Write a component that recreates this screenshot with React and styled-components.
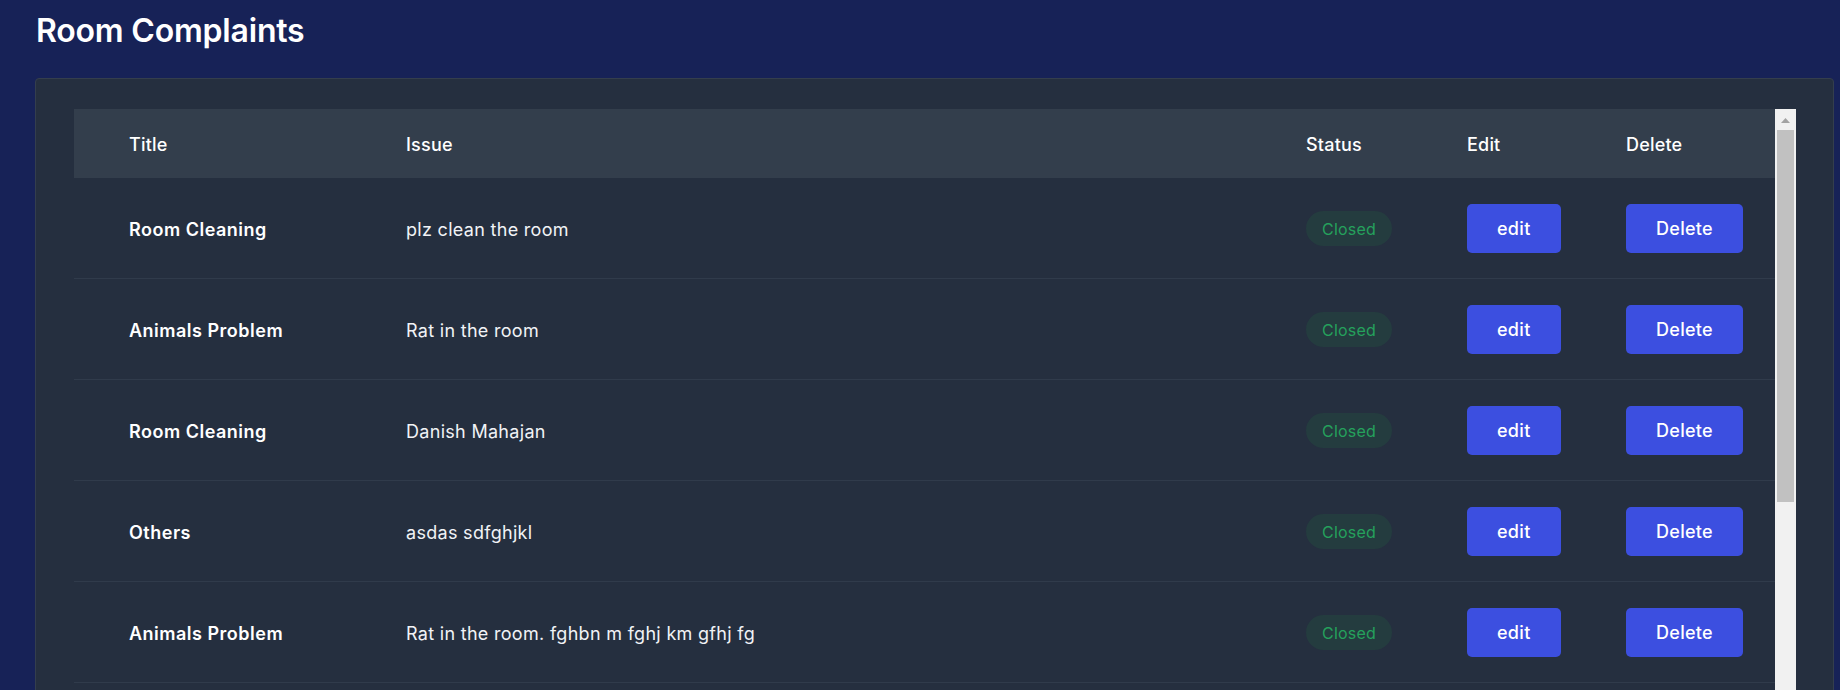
import React from "react";
import styled, { createGlobalStyle } from "styled-components";

const GlobalStyle = createGlobalStyle`
  html, body {
    margin: 0;
    padding: 0;
    background: #172257;
    font-family: Inter, "Noto Sans", sans-serif;
    overflow: hidden;
  }
  * { box-sizing: border-box; }
`;

const Page = styled.div`
  padding: 10px 6px 0 35px;
  min-height: 690px;
`;

const Heading = styled.h1`
  margin: 0 0 27px 1px;
  font-size: 32px;
  line-height: 41px;
  font-weight: 600;
  color: #ffffff;
  letter-spacing: -0.2px;
`;

const Panel = styled.section`
  background: #252f3f;
  border: 1px solid #343e4d;
  border-radius: 4px;
  padding: 30px 37px 30px 38px;
`;

const Scroller = styled.div`
  display: flex;
  height: 600px;
  overflow: hidden;
`;

const Table = styled.div`
  flex: 1;
  min-width: 0;
`;

const Rail = styled.div`
  width: 21px;
  flex: none;
  background: #f1f1f1;
  display: flex;
  flex-direction: column;
`;

const RailButton = styled.div`
  height: 21px;
  display: flex;
  align-items: center;
  justify-content: center;
  padding-top: 2px;
`;

const Thumb = styled.div`
  height: 372px;
  margin: 0 2px;
  background: #c1c1c1;
`;

const Grid = styled.div`
  display: grid;
  grid-template-columns: 277px 900px 161px 159px 1fr;
  align-items: center;
`;

const HeadRow = styled(Grid)`
  height: 69px;
  background: #333e4c;
`;

const Row = styled(Grid)`
  height: 101px;
  border-bottom: 1px solid #303b4b;
`;

const HeadCell = styled.div`
  padding: 2px 0 0 55px;
  font-size: 18px;
  font-weight: 500;
  letter-spacing: 0.2px;
  color: #ffffff;
`;

const Cell = styled.div`
  padding: ${(p) => (p.$text ? "4px" : "0")} 0 0 55px;
  font-size: 18px;
  line-height: 24px;
  letter-spacing: ${(p) => (p.$strong ? "0.5px" : "0.3px")};
  font-weight: ${(p) => (p.$strong ? 600 : 400)};
  color: ${(p) => (p.$strong ? "#ffffff" : "#f1f3f6")};
  white-space: nowrap;
`;

const Badge = styled.span`
  display: inline-flex;
  align-items: center;
  height: 35px;
  padding: 2px 16px 0;
  border-radius: 18px;
  background: #243c3f;
  color: #25a15c;
  font-size: 16px;
  letter-spacing: 0.2px;
`;

const Button = styled.button`
  height: 49px;
  padding: 0 30px;
  border: none;
  border-radius: 5px;
  background: #3c4fe0;
  color: #ffffff;
  font-family: inherit;
  font-size: 18px;
  font-weight: 500;
  letter-spacing: 0.3px;
  cursor: pointer;
`;

const ArrowUp = () => (
  <svg width="9" height="5" viewBox="0 0 9 5" aria-hidden="true">
    <path d="M0 5 L4.5 0 L9 5 Z" fill="#a3a3a3" />
  </svg>
);

const rows = [
  { title: "Room Cleaning", issue: "plz clean the room" },
  { title: "Animals Problem", issue: "Rat in the room" },
  { title: "Room Cleaning", issue: "Danish Mahajan" },
  { title: "Others", issue: "asdas sdfghjkl" },
  { title: "Animals Problem", issue: "Rat in the room. fghbn m fghj km gfhj fg" },
];

export default function App() {
  return (
    <>
      <GlobalStyle />
      <Page>
        <Heading>Room Complaints</Heading>
        <Panel>
          <Scroller>
            <Table>
              <HeadRow>
                <HeadCell>Title</HeadCell>
                <HeadCell>Issue</HeadCell>
                <HeadCell>Status</HeadCell>
                <HeadCell>Edit</HeadCell>
                <HeadCell>Delete</HeadCell>
              </HeadRow>
              {rows.map((r, i) => (
                <Row key={i}>
                  <Cell $text $strong>{r.title}</Cell>
                  <Cell $text>{r.issue}</Cell>
                  <Cell>
                    <Badge>Closed</Badge>
                  </Cell>
                  <Cell>
                    <Button>edit</Button>
                  </Cell>
                  <Cell>
                    <Button>Delete</Button>
                  </Cell>
                </Row>
              ))}
            </Table>
            <Rail>
              <RailButton>
                <ArrowUp />
              </RailButton>
              <Thumb />
            </Rail>
          </Scroller>
        </Panel>
      </Page>
    </>
  );
}
